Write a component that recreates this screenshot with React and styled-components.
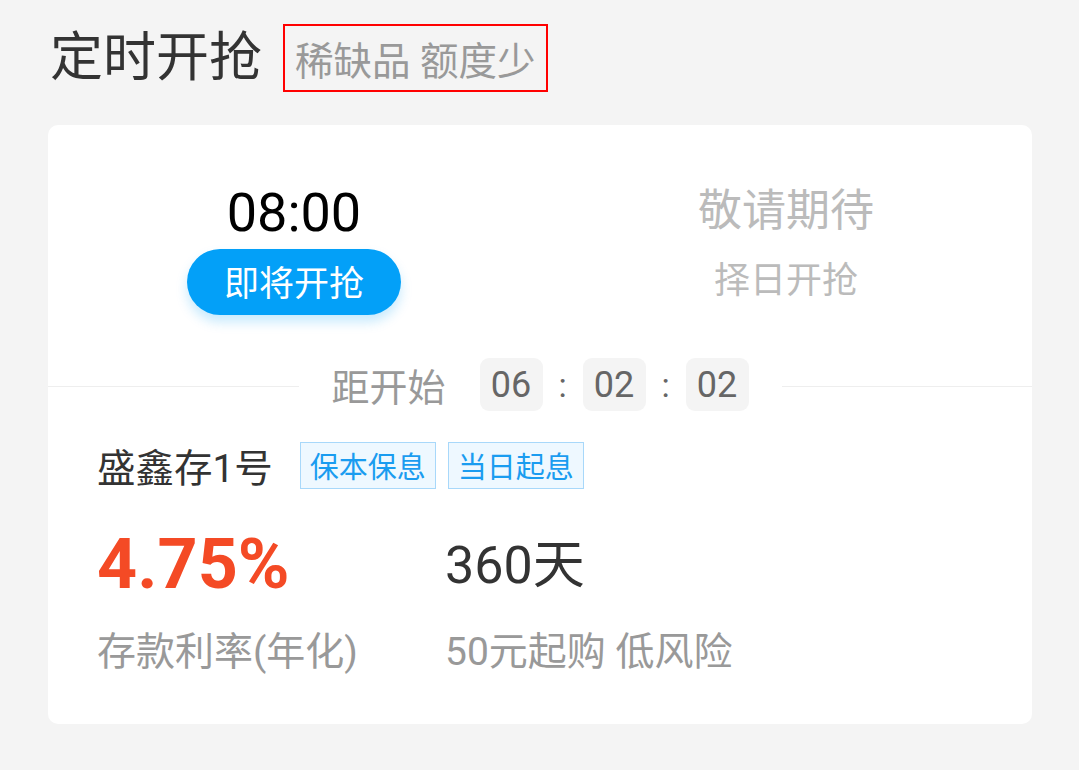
import React from 'react';
import styled, { createGlobalStyle } from 'styled-components';

const GlobalStyle = createGlobalStyle`
  body {
    margin: 0;
    background: #f4f4f4;
    font-family: Roboto, "Noto Sans CJK SC", sans-serif;
  }
`;

const Page = styled.div`
  width: 1079px;
  height: 770px;
  padding: 0 47px 0 48px;
  box-sizing: border-box;
`;

const Header = styled.div`
  display: flex;
  align-items: center;
  padding: 24px 0 33px 2px;
`;

const Title = styled.h1`
  margin: 0 21px 0 0;
  font-size: 53px;
  font-weight: 400;
  line-height: 1;
  color: #333;
`;

const Slogan = styled.div`
  height: 68px;
  box-sizing: border-box;
  border: 2px solid #f00;
  padding: 0 10px;
  display: flex;
  align-items: center;
  font-size: 38.5px;
  color: #999;
`;

const Card = styled.div`
  background: #fff;
  border-radius: 10px;
  height: 599px;
  box-sizing: border-box;
  padding-top: 56px;
`;

const Sessions = styled.div`
  display: grid;
  grid-template-columns: 1fr 1fr;
`;

const Session = styled.div`
  display: flex;
  flex-direction: column;
  align-items: center;
`;

const Time = styled.div`
  font-size: 54px;
  line-height: 64px;
  color: #000;
  margin-bottom: 4px;
`;

const GrabButton = styled.button`
  width: 214px;
  height: 66px;
  padding: 0 0 4px;
  border: none;
  border-radius: 33px;
  background: #03a0f8;
  color: #fff;
  font-family: inherit;
  font-size: 35px;
  box-shadow: 0 7px 12px rgba(3, 160, 248, 0.22);
`;

const Pending = styled.div`
  font-size: ${p => p.size}px;
  line-height: ${p => p.lh}px;
  color: #bbb;
  margin-bottom: ${p => p.gap || 0}px;
`;

const Countdown = styled.div`
  display: flex;
  align-items: center;
  margin-top: 42px;
`;

const Line = styled.div`
  flex: 1;
  height: 1px;
  margin-top: 3px;
  background: #eee;
`;

const Clock = styled.div`
  display: flex;
  align-items: center;
  padding: 0 33px;
`;

const ClockLabel = styled.span`
  font-size: 38px;
  color: #999;
  margin-right: 34px;
`;

const Digit = styled.span`
  width: 63px;
  height: 53px;
  border-radius: 9px;
  background: #f4f4f4;
  display: flex;
  align-items: center;
  justify-content: center;
  font-size: 36px;
  color: #666;
`;

const Sep = styled.span`
  width: 40px;
  text-align: center;
  font-size: 34px;
  color: #666;
`;

const Product = styled.div`
  display: flex;
  align-items: center;
  padding-left: 49px;
  margin-top: 25px;
`;

const ProductName = styled.span`
  font-size: 38.5px;
  color: #333;
  margin-right: 27px;
`;

const Tag = styled.span`
  height: 47px;
  box-sizing: border-box;
  border: 1px solid #a8d8fa;
  background: #eef8ff;
  color: #1a9cf0;
  font-size: 29px;
  padding: 0 9px;
  display: flex;
  align-items: center;
  margin-right: 12px;
`;

const Stats = styled.div`
  display: grid;
  grid-template-columns: 348px 1fr;
  padding-left: 49px;
  margin-top: 27px;
`;

const Stat = styled.div`
  display: flex;
  flex-direction: column;
`;

const Value = styled.div`
  height: 80px;
  display: flex;
  align-items: center;
  font-size: ${p => (p.accent ? 70 : 52)}px;
  font-weight: ${p => (p.accent ? 700 : 400)};
  color: ${p => (p.accent ? '#f44a25' : '#333')};
  margin-top: ${p => (p.accent ? 4 : 0)}px;
`;

const Label = styled.div`
  font-size: 39px;
  line-height: 50px;
  color: #999;
  margin-top: ${p => (p.accent ? 23 : 27)}px;
`;

const App = () => {
  const digits = ['06', '02', '02'];

  return (
    <Page>
      <GlobalStyle />
      <Header>
        <Title>定时开抢</Title>
        <Slogan>稀缺品 额度少</Slogan>
      </Header>
      <Card>
        <Sessions>
          <Session>
            <Time>08:00</Time>
            <GrabButton>即将开抢</GrabButton>
          </Session>
          <Session>
            <Pending size={44} lh={60} gap={15}>敬请期待</Pending>
            <Pending size={36} lh={50}>择日开抢</Pending>
          </Session>
        </Sessions>
        <Countdown>
          <Line />
          <Clock>
            <ClockLabel>距开始</ClockLabel>
            {digits.map((d, i) => (
              <React.Fragment key={i}>
                {i > 0 && <Sep>:</Sep>}
                <Digit>{d}</Digit>
              </React.Fragment>
            ))}
          </Clock>
          <Line />
        </Countdown>
        <Product>
          <ProductName>盛鑫存1号</ProductName>
          <Tag>保本保息</Tag>
          <Tag>当日起息</Tag>
        </Product>
        <Stats>
          <Stat>
            <Value accent>4.75%</Value>
            <Label accent>存款利率(年化)</Label>
          </Stat>
          <Stat>
            <Value>360天</Value>
            <Label>50元起购 低风险</Label>
          </Stat>
        </Stats>
      </Card>
    </Page>
  );
};

export default App;
